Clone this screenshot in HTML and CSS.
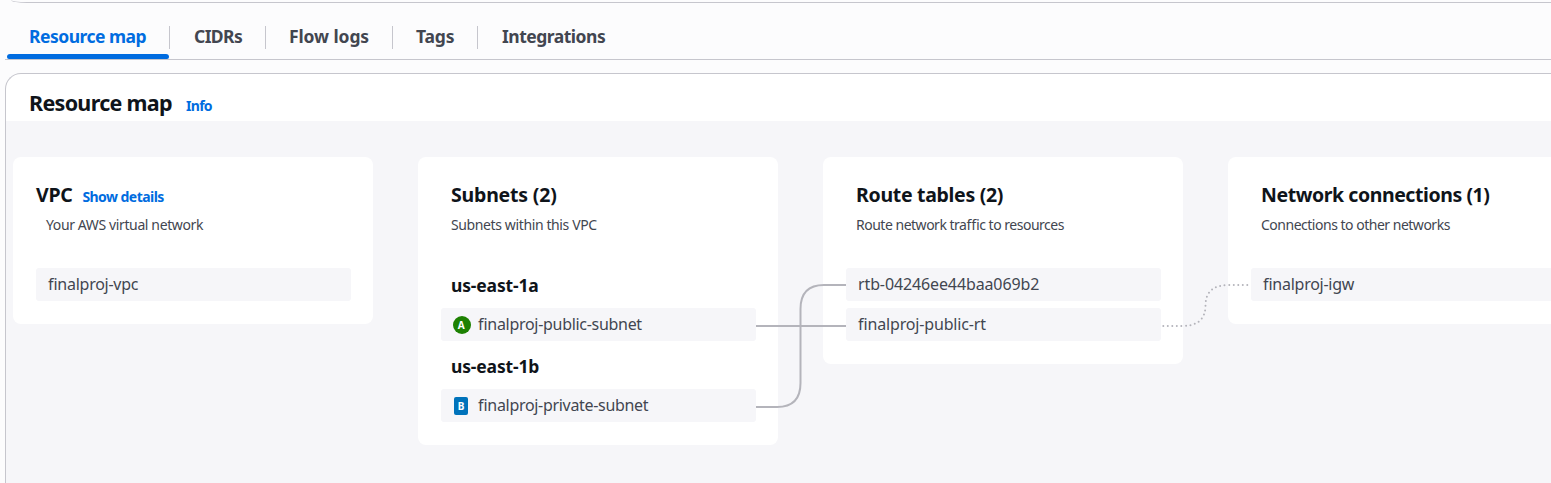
FILE: index.html
```html
<!DOCTYPE html>
<html lang="en">
<head>
<meta charset="utf-8">
<title>Resource map</title>
<link rel="stylesheet" href="styles.css">
</head>
<body>
<div class="details-end"></div>
<nav class="tabs">
  <a class="tab tab-map active"><span>Resource map</span></a>
  <a class="tab tab-cidrs"><span>CIDRs</span></a>
  <a class="tab tab-logs"><span>Flow logs</span></a>
  <a class="tab tab-tags"><span>Tags</span></a>
  <a class="tab tab-int"><span>Integrations</span></a>
</nav>
<section class="panel">
  <header class="panel-header"><h1>Resource map</h1><a class="info">Info</a></header>
  <div class="map">
    <article class="card vpc">
      <div class="card-head"><h2>VPC</h2><a class="show">Show details</a></div>
      <p class="desc">Your AWS virtual network</p>
      <div class="items"><div class="item"><span class="n-vpc">finalproj-vpc</span></div></div>
    </article>
    <article class="card">
      <div class="card-head"><h2 class="h-sub">Subnets (2)</h2></div>
      <p class="desc">Subnets within this VPC</p>
      <div class="zones">
        <h3>us-east-1a</h3>
        <div class="item">
          <svg class="badge" width="18" height="18" viewBox="0 0 18 18"><circle cx="9" cy="9" r="9" fill="#1d8102"/><text x="8.2" y="12.7" class="badge-text">A</text></svg>
          <span class="n-pub">finalproj-public-subnet</span>
        </div>
        <h3>us-east-1b</h3>
        <div class="item">
          <svg class="badge" width="18" height="18" viewBox="0 0 18 18"><rect x="1" y="0" width="14" height="18" rx="2" fill="#0073bb"/><text x="8" y="12.7" class="badge-text">B</text></svg>
          <span class="n-priv">finalproj-private-subnet</span>
        </div>
      </div>
    </article>
    <article class="card">
      <div class="card-head"><h2>Route tables (2)</h2></div>
      <p class="desc d-rt">Route network traffic to resources</p>
      <div class="items">
        <div class="item"><span class="n-rtb">rtb-04246ee44baa069b2</span></div>
        <div class="item"><span class="n-rt">finalproj-public-rt</span></div>
      </div>
    </article>
    <article class="card">
      <div class="card-head"><h2 class="h-net">Network connections (1)</h2></div>
      <p class="desc d-net">Connections to other networks</p>
      <div class="items"><div class="item"><span class="n-igw">finalproj-igw</span></div></div>
    </article>
    <svg class="links" width="1545" height="361" viewBox="6 121 1545 361">
      <path d="M756 326H846"/>
      <path d="M756 407H777Q800.500 407 800.500 383V309Q800.500 285 824 285H846"/>
      <path class="dotted" d="M1163.300 326H1182Q1205.500 326 1205.500 305.500Q1205.500 285 1229 285H1250"/>
    </svg>
  </div>
</section>
</body>
</html>
```
FILE: styles.css
```css
* { box-sizing: border-box; }
body {
  margin: 0;
  height: 483px;
  overflow: hidden;
  background: #fcfcfd;
  color: #424650;
  font-family: "Noto Sans", "Open Sans", sans-serif;
  font-feature-settings: "liga" 1;
  padding-left: 5px;
}
h1, h2, h3, p { margin: 0; color: #0f141a; white-space: nowrap; }
.details-end {
  height: 3px;
  border-bottom: 1px solid #c6c6cd;
  border-bottom-left-radius: 16px 3px;
  margin-left: 6px;
}
.tabs {
  display: flex;
  height: 57px;
  padding-top: 23px;
  border-bottom: 1px solid #c6c6cd;
}
.tab {
  height: 23px;
  padding-left: 24px;
  border-right: 1px solid #c6c6cd;
  font-size: 17.500px;
  font-weight: 700;
  line-height: 22px;
  white-space: nowrap;
}
.tab span { display: block; margin-top: -1px; }
.tab-map { width: 165px; letter-spacing: -0.500px; }
.tab-cidrs { width: 96px; letter-spacing: -0.600px; }
.tab-logs { width: 127px; padding-left: 23px; letter-spacing: -0.100px; }
.tab-tags { width: 85px; padding-left: 23px; letter-spacing: -0.200px; }
.tab-int { border-right: 0; letter-spacing: -0.500px; }
.active { color: #006ce0; }
.active::after {
  content: "";
  display: block;
  width: 162px;
  height: 5px;
  margin: 7px 0 0 -22px;
  border-radius: 3px 3px 2px 2px;
  background: #006ce0;
}
.panel {
  margin-top: 13px;
  height: 430px;
  border: 1px solid #c6c6cd;
  border-right: 0;
  border-radius: 16px 0 0 16px;
  background: #fff;
  overflow: hidden;
}
.panel-header {
  display: flex;
  align-items: baseline;
  height: 47px;
  padding: 14px 0 0 23px;
}
h1 { font-size: 21.500px; line-height: 30px; letter-spacing: -0.700px; width: 157px; }
.info { color: #006ce0; font-size: 14px; font-weight: 700; letter-spacing: -0.700px; }
.map {
  position: relative;
  display: flex;
  align-items: flex-start;
  gap: 45px;
  height: 382px;
  padding: 36px 7px;
  background: #f6f6f9;
  overflow: hidden;
}
.card {
  flex: 0 0 360px;
  padding: 23px 22px 23px 23px;
  border-radius: 8px;
  background: #fff;
}
.card-head {
  display: flex;
  align-items: baseline;
  gap: 10px;
  height: 30px;
  padding-left: 10px;
}
.vpc .card-head { padding-left: 0; }
h2 { font-size: 19.500px; line-height: 30px; letter-spacing: -0.300px; }
.h-sub { letter-spacing: -0.200px; }
.h-net { letter-spacing: -0.430px; }
.show { color: #006ce0; font-size: 14px; font-weight: 700; letter-spacing: -0.550px; }
.desc {
  height: 30px;
  padding-left: 10px;
  color: #424650;
  font-size: 14px;
  line-height: 30px;
  letter-spacing: -0.380px;
}
.d-rt { letter-spacing: -0.490px; }
.d-net { letter-spacing: -0.490px; }
.items { display: flex; flex-direction: column; gap: 7px; padding-top: 28px; }
.item {
  display: flex;
  align-items: center;
  height: 33px;
  padding: 0 12px;
  border-radius: 3px;
  background: #f6f6f9;
  font-size: 16px;
  line-height: 33px;
  white-space: nowrap;
}
.n-vpc, .n-igw { letter-spacing: -0.260px; }
.n-pub { letter-spacing: -0.300px; }
.n-priv { letter-spacing: -0.310px; }
.n-rtb { letter-spacing: -0.120px; }
.n-rt { letter-spacing: -0.160px; }
.zones { padding-top: 28px; }
.zones .item { margin-bottom: 8px; }
.zones .item:last-child { margin-bottom: 0; }
h3 {
  height: 40px;
  padding-left: 10px;
  font-size: 17.500px;
  line-height: 34px;
  letter-spacing: -0.150px;
}
.badge { flex: none; margin-right: 7px; }
.badge-text { fill: #fff; font-size: 10px; font-weight: 700; text-anchor: middle; }
.links { position: absolute; left: 0; top: 0; }
.links path { fill: none; stroke: #b4b4bb; stroke-width: 2; }
.links .dotted { stroke-dasharray: 0 4.500; stroke-linecap: round; }
```
